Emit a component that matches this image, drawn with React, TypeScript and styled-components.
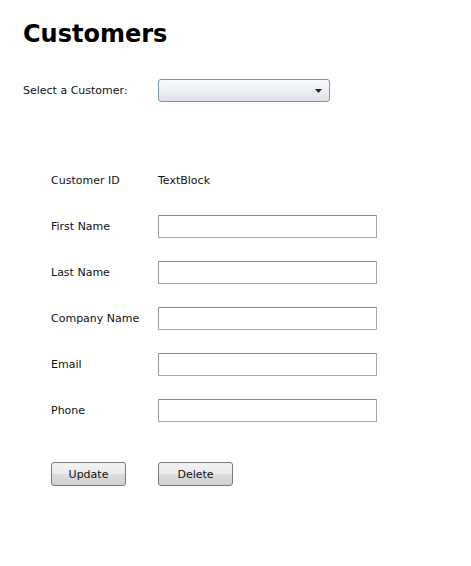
import React from "react";
import styled, { createGlobalStyle } from "styled-components";

const GlobalStyle = createGlobalStyle`
  html, body {
    margin: 0;
    padding: 0;
    background: #ffffff;
  }
  body {
    font-family: "DejaVu Sans", Verdana, sans-serif;
    font-size: 11px;
    color: #111;
  }
`;

const Page = styled.div`
  width: 471px;
  height: 566px;
  padding: 20px 0 0 23px;
  box-sizing: border-box;
`;

const Title = styled.h1`
  margin: 0;
  font-size: 24px;
  line-height: 28px;
  font-weight: bold;
  color: #000;
`;

const SelectRow = styled.div`
  display: flex;
  align-items: center;
  margin-top: 31px;
  label {
    width: 135px;
  }
`;

const Combo = styled.div`
  width: 172px;
  height: 23px;
  box-sizing: border-box;
  border: 1px solid #6f9aa6;
  border-radius: 3px;
  background: linear-gradient(#fbfcfd 0%, #eef0f3 50%, #dde2e8 100%);
  display: flex;
  align-items: center;
  justify-content: flex-end;
  padding-right: 7px;
  svg {
    display: block;
  }
`;

const Form = styled.div`
  display: grid;
  grid-template-columns: 107px 219px;
  grid-auto-rows: 23px;
  row-gap: 23px;
  align-items: center;
  margin: 67px 0 0 28px;
`;

const Label = styled.span`
  line-height: 23px;
`;

const Field = styled.div`
  height: 23px;
  box-sizing: border-box;
  border: 1px solid #a4a6a9;
  border-top-color: #85878a;
  border-left-color: #9a9c9f;
  border-radius: 1px;
  background: #fff;
`;

const Buttons = styled.div`
  display: grid;
  grid-template-columns: 107px 75px;
  margin: 40px 0 0 28px;
`;

const Button = styled.button`
  width: 75px;
  height: 24px;
  box-sizing: border-box;
  border: 1px solid #7a7a7a;
  border-radius: 3px;
  background: linear-gradient(#f3f3f3 0%, #ebebeb 50%, #dddddd 51%, #cfcfcf 100%);
  font-family: "DejaVu Sans", Verdana, sans-serif;
  font-size: 11px;
  color: #111;
  padding: 0;
`;

const fields = ["First Name", "Last Name", "Company Name", "Email", "Phone"];

export default function App() {
  return (
    <>
      <GlobalStyle />
      <Page>
        <Title>Customers</Title>
        <SelectRow>
          <label>Select a Customer:</label>
          <Combo>
            <svg width="7" height="4" viewBox="0 0 7 4">
              <path d="M0 0h7L3.5 4z" fill="#222" />
            </svg>
          </Combo>
        </SelectRow>
        <Form>
          <Label>Customer ID</Label>
          <Label>TextBlock</Label>
          {fields.map((f) => (
            <React.Fragment key={f}>
              <Label>{f}</Label>
              <Field />
            </React.Fragment>
          ))}
        </Form>
        <Buttons>
          <Button>Update</Button>
          <Button>Delete</Button>
        </Buttons>
      </Page>
    </>
  );
}
